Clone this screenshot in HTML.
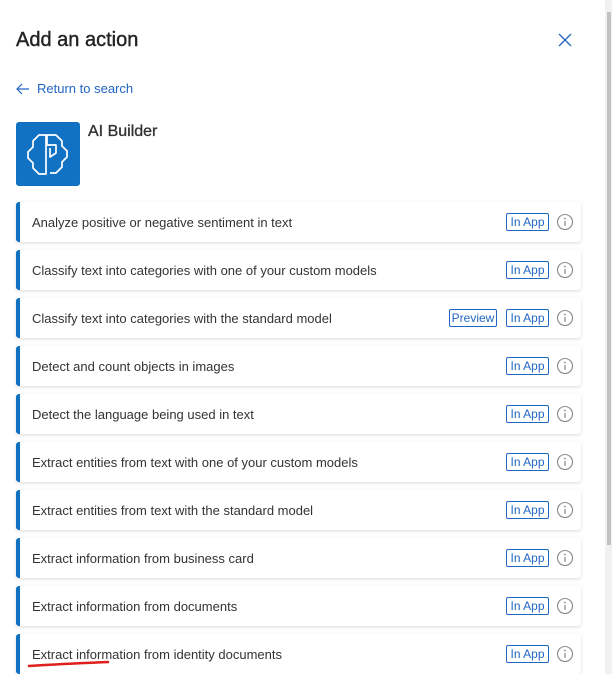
<!DOCTYPE html>
<html><head><style>
body{margin:0;width:612px;height:674px;overflow:hidden;background:#fff;font-family:"Liberation Sans",sans-serif;position:relative;color:#242424}
.h{position:absolute;left:16px;top:29px;font-size:20px;font-weight:normal;-webkit-text-stroke:0.4px #242424}
.x{position:absolute;left:557px;top:32px}
.back{position:absolute;left:16px;top:81px;font-size:13px;color:#2266c4}
.back span{position:absolute;left:21px;top:0;white-space:nowrap}
.logo{position:absolute;left:16px;top:122px;width:64px;height:64px;background:#1172c4;border-radius:3px}
.ab{position:absolute;left:88px;top:123px;font-size:16px;font-weight:normal;-webkit-text-stroke:0.35px #333;color:#333}
.card{position:absolute;left:16px;width:565px;height:40px;background:#fff;border-radius:3px;box-shadow:0 1px 3px rgba(0,0,0,.16);border-left:4px solid #1172c4;box-sizing:border-box}
.card .t{position:absolute;left:12px;top:13px;font-size:13px;color:#333;white-space:nowrap}
.b{position:absolute;top:11px;height:16px;border:1px solid #2266c4;border-radius:2px;color:#2266c4;font-size:12px;line-height:16px;text-align:center}
.i{position:absolute;left:536px;top:11px}
.sb{position:absolute;left:605px;top:0;width:7px;height:674px;background:#f1f1f1}
.th{position:absolute;left:607px;top:12px;width:4px;height:533px;background:#c1c1c1}
</style></head><body>
<div class="h">Add an action</div>
<svg class="x" width="16" height="16" viewBox="0 0 16 16"><path d="M2 2L14 14M14 2L2 14" stroke="#2266c4" stroke-width="1.3"/></svg>
<div class="back"><svg width="14" height="14" viewBox="0 0 14 14" style="position:absolute;top:1px"><path d="M13 7H1M6 2L1 7l5 5" fill="none" stroke="#2266c4" stroke-width="1.2"/></svg><span>Return to search</span></div>
<div class="logo"><svg width="64" height="64" viewBox="0 0 64 64"><g fill="none" stroke="#fff" stroke-width="1.7" stroke-linejoin="round"><path d="M30 13h-7l-6 6v6l-5 5v6l5 5v5l6 6h7z"/><path d="M34 51h6l6-6v-5l5-5v-6l-5-5v-5l-6-6h-9v10h9v8l-6 4v-9"/></g></svg></div>
<div class="ab">AI Builder</div>
<div class="card" style="top:202px"><div class="t">Analyze positive or negative sentiment in text</div></div>
<div class="card" style="top:250px"><div class="t">Classify text into categories with one of your custom models</div></div>
<div class="card" style="top:298px"><div class="t">Classify text into categories with the standard model</div><div class="b" style="left:429px;width:46px">Preview</div></div>
<div class="card" style="top:346px"><div class="t">Detect and count objects in images</div></div>
<div class="card" style="top:394px"><div class="t">Detect the language being used in text</div></div>
<div class="card" style="top:442px"><div class="t">Extract entities from text with one of your custom models</div></div>
<div class="card" style="top:490px"><div class="t">Extract entities from text with the standard model</div></div>
<div class="card" style="top:538px"><div class="t">Extract information from business card</div></div>
<div class="card" style="top:586px"><div class="t">Extract information from documents</div></div>
<div class="card" style="top:634px"><div class="t">Extract information from identity documents</div></div>
<svg style="position:absolute;left:26px;top:656px" width="86" height="14"><path d="M3 10C30 8 60 7 82 6" stroke="#e0201c" stroke-width="2.5" fill="none" stroke-linecap="round"/></svg>
<div class="sb"></div><div class="th"></div>
<script>
document.querySelectorAll('.card').forEach(c=>{
 c.insertAdjacentHTML('beforeend','<div class="b" style="left:486px;width:41px">In App</div><svg class="i" width="18" height="18" viewBox="0 0 18 18"><circle cx="9" cy="9" r="7.5" fill="none" stroke="#8a8a8a" stroke-width="1.1"/><path d="M9 8v5" stroke="#8a8a8a" stroke-width="1.3"/><circle cx="9" cy="5.5" r="0.9" fill="#8a8a8a"/></svg>');
});
</script>
</body></html>
